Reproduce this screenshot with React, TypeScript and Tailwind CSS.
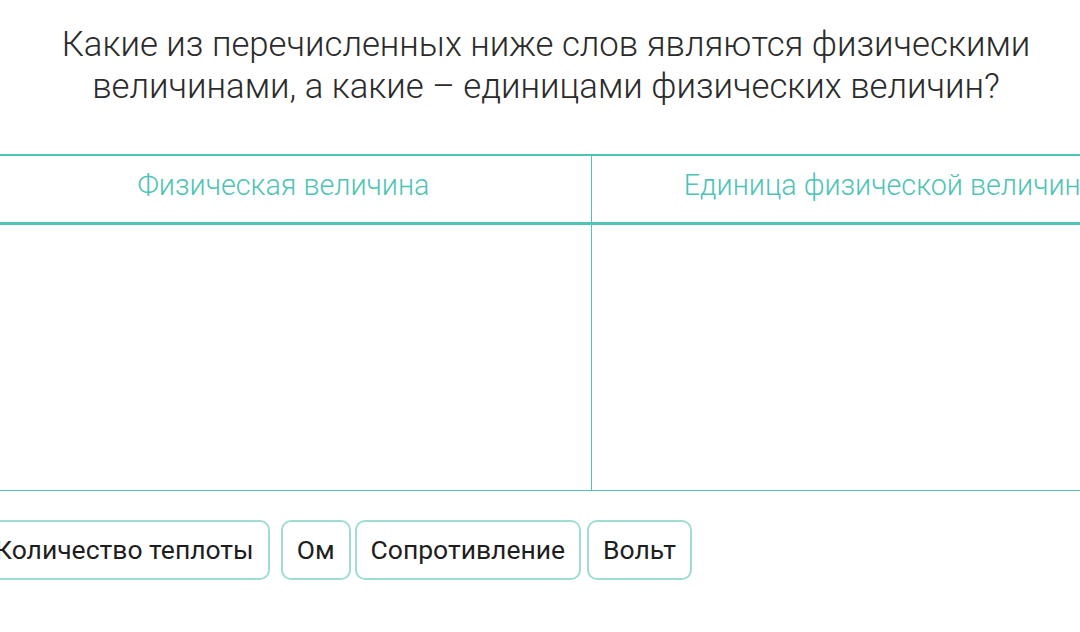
import React from 'react'

const chips = [
    { label: 'Количество теплоты', gap: 'ml-0' },
    { label: 'Ом', gap: 'ml-[11px]' },
    { label: 'Сопротивление', gap: 'ml-[4px]' },
    { label: 'Вольт', gap: 'ml-[6px]' },
]

export default function App() {
    return (
        <div className="w-[1080px] h-[632px] overflow-hidden bg-white font-['Roboto','Noto_Sans',sans-serif]">
            {/* вопрос */}
            <div className="pt-[23px] pl-[12px] text-center text-[34.7px] leading-[42px] font-light text-[#2b2b2b] whitespace-nowrap">
                <p>Какие из перечисленных ниже слов являются физическими</p>
                <p>величинами, а какие – единицами физических величин?</p>
            </div>

            {/* таблица */}
            <div className="mt-[47px] -ml-[24px] w-[1218px] border-t-2 border-b border-[#4fc3b5]">
                <div className="flex border-b-[3px] border-[#4fc3b5]">
                    <div className="w-[616px] h-[66px] pb-[6px] flex items-center justify-center text-[28.7px] font-light text-[#4fc3b5] border-r border-r-[#4fc3b5]">
                        Физическая величина
                    </div>
                    <div className="flex-1 h-[66px] pb-[6px] flex items-center justify-center text-[28.7px] font-light text-[#4fc3b5] whitespace-nowrap">
                        Единица физической величины
                    </div>
                </div>
                <div className="flex h-[265px]">
                    <div className="w-[616px] border-r border-r-[#4fc3b5]" />
                    <div className="flex-1" />
                </div>
            </div>

            {/* варианты */}
            <div className="mt-[29px] -ml-[21px] flex">
                {chips.map((chip) => (
                    <div
                        key={chip.label}
                        className={`${chip.gap} h-[60px] px-[14px] flex items-center rounded-[10px] border-2 border-[#9fdcd2] text-[26.5px] text-[#1e1e1e] whitespace-nowrap`}
                    >
                        {chip.label}
                    </div>
                ))}
            </div>
        </div>
    )
}
